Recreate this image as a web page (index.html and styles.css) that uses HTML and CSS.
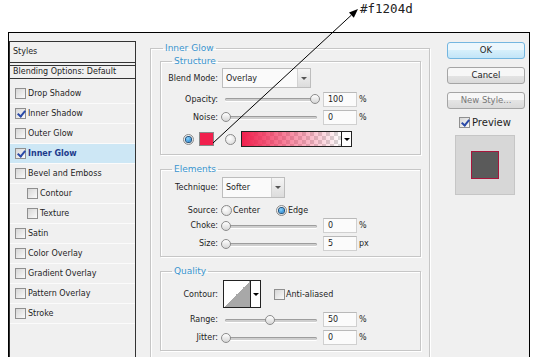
FILE: index.html
```html
<!DOCTYPE html>
<html>
<head>
  <title>Layer Style - Inner Glow</title>
  <link rel="stylesheet" href="styles.css">
</head>
<body>
  <div class="note">#f1204d</div>
  <svg class="arrow" width="539" height="357">
    <line x1="213" y1="143" x2="351.4" y2="15.1" stroke="#000" stroke-width="1"/>
    <polygon points="358,9 353.8,17.7 349,12.5" fill="#000"/>
  </svg>

  <div class="dialog">
    <div class="styles">
      <div class="styles-head">Styles</div>
      <div class="styles-blend">Blending Options: Default</div>
      <ul class="style-list">
        <li><span class="check"></span>Drop Shadow</li>
        <li><span class="check on"></span>Inner Shadow</li>
        <li><span class="check"></span>Outer Glow</li>
        <li class="sel"><span class="check on"></span>Inner Glow</li>
        <li><span class="check"></span>Bevel and Emboss</li>
        <li class="sub"><span class="check"></span>Contour</li>
        <li class="sub"><span class="check"></span>Texture</li>
        <li><span class="check"></span>Satin</li>
        <li><span class="check"></span>Color Overlay</li>
        <li><span class="check"></span>Gradient Overlay</li>
        <li><span class="check"></span>Pattern Overlay</li>
        <li><span class="check"></span>Stroke</li>
      </ul>
    </div>

    <fieldset class="group">
      <legend>Inner Glow</legend>

      <fieldset class="sub-group structure">
        <legend>Structure</legend>
        <div class="row tall">
          <label>Blend Mode:</label>
          <div class="select blend"><span>Overlay</span><i></i></div>
        </div>
        <div class="row gap2">
          <label>Opacity:</label>
          <div class="slider"><span class="knob" style="left:89px"></span></div>
          <div class="num">100</div>
          <span class="unit">%</span>
        </div>
        <div class="row gap2">
          <label>Noise:</label>
          <div class="slider"><span class="knob" style="left:0px"></span></div>
          <div class="num">0</div>
          <span class="unit">%</span>
        </div>
        <div class="row colors">
          <span class="radio on first"></span>
          <span class="swatch"></span>
          <span class="radio second"></span>
          <div class="gradient"><span class="ramp"></span><i></i></div>
        </div>
      </fieldset>

      <fieldset class="sub-group elements">
        <legend>Elements</legend>
        <div class="row technique">
          <label>Technique:</label>
          <div class="select soft"><span>Softer</span><i></i></div>
        </div>
        <div class="row source">
          <label>Source:</label>
          <span class="radio"></span><span class="opt">Center</span>
          <span class="radio on edge"></span><span class="opt">Edge</span>
        </div>
        <div class="row slim">
          <label>Choke:</label>
          <div class="slider"><span class="knob" style="left:0px"></span></div>
          <div class="num">0</div>
          <span class="unit">%</span>
        </div>
        <div class="row slim gap3">
          <label>Size:</label>
          <div class="slider"><span class="knob" style="left:0px"></span></div>
          <div class="num">5</div>
          <span class="unit">px</span>
        </div>
      </fieldset>

      <fieldset class="sub-group quality">
        <legend>Quality</legend>
        <div class="row contour-row">
          <label>Contour:</label>
          <div class="contour"><span class="curve"></span><i></i></div>
          <span class="check aa"></span><span class="opt">Anti-aliased</span>
        </div>
        <div class="row slim gap4">
          <label>Range:</label>
          <div class="slider"><span class="knob" style="left:44px"></span></div>
          <div class="num">50</div>
          <span class="unit">%</span>
        </div>
        <div class="row slim gap3">
          <label>Jitter:</label>
          <div class="slider"><span class="knob" style="left:0px"></span></div>
          <div class="num">0</div>
          <span class="unit">%</span>
        </div>
      </fieldset>
    </fieldset>

    <div class="side">
      <div class="btn ok">OK</div>
      <div class="btn">Cancel</div>
      <div class="btn off">New Style...</div>
      <div class="preview-row"><span class="check on"></span>Preview</div>
      <div class="preview"><span class="thumb"></span></div>
    </div>
  </div>
</body>
</html>
```

FILE: styles.css
```css
* {
  margin: 0;
  padding: 0;
  box-sizing: border-box;
}

body {
  font-family: "DejaVu Sans", Tahoma, sans-serif;
  font-size: 8px;
  color: #1e1e1e;
  background: #fff;
  width: 539px;
  height: 357px;
  overflow: hidden;
  position: relative;
}

.note {
  height: 32px;
  padding-left: 360px;
  padding-top: 1px;
  font-family: "DejaVu Sans Mono", monospace;
  font-size: 12.5px;
  line-height: 15px;
  color: #222;
}

.arrow {
  position: absolute;
  left: 0;
  top: 0;
  z-index: 2;
}

.dialog {
  margin-left: 8px;
  width: 522px;
  height: 325px;
  border: 1px solid #000;
  border-bottom: 0;
  background: #f0f0f0;
  display: flex;
  align-items: flex-start;
  padding-top: 8px;
}

/* left list */
.styles {
  width: 127px;
  height: 330px;
  border: 1px solid #333;
  border-bottom: 0;
  flex: none;
}

.styles-head {
  height: 21px;
  line-height: 20px;
  padding-left: 3px;
  border-bottom: 1px solid #333;
}

.styles-blend {
  margin-top: 2px;
  height: 14px;
  line-height: 12px;
  padding-left: 3px;
  border-top: 1px solid #333;
  border-bottom: 1px solid #333;
}

.style-list {
  list-style: none;
  padding-top: 5px;
}

.style-list li {
  height: 20px;
  display: flex;
  align-items: center;
  gap: 2px;
  padding-left: 5px;
  border-bottom: 1px solid #fbfbfb;
}

.style-list li.sub {
  padding-left: 17px;
}

.style-list li.sel {
  background: #cde7f5;
  color: #1c3a8c;
  font-weight: bold;
}

.check {
  width: 11px;
  height: 11px;
  border: 1px solid #8f8f8f;
  background: linear-gradient(135deg, #d6d6d6, #fafafa);
  position: relative;
  flex: none;
}

.check.on::after {
  content: "";
  position: absolute;
  left: 3px;
  top: 0;
  width: 3px;
  height: 6px;
  border: solid #2a4aa8;
  border-width: 0 2px 2px 0;
  transform: rotate(40deg);
}

.radio {
  width: 11px;
  height: 11px;
  border-radius: 50%;
  border: 1px solid #8a8a8a;
  background: radial-gradient(circle at 40% 35%, #fff, #d6d6d6);
  position: relative;
  flex: none;
}

.radio.on::after {
  content: "";
  position: absolute;
  left: 2px;
  top: 2px;
  width: 5px;
  height: 5px;
  border-radius: 50%;
  background: radial-gradient(circle at 40% 35%, #8ad6ff, #0b6fc4);
  box-shadow: 0 0 0 1px #1d4f7a;
}

/* group boxes */
fieldset {
  border: 1px solid #c6c6c6;
  box-shadow: inset 1px 1px 0 #fff, 1px 1px 0 #fff;
}

legend {
  font-size: 9px;
  line-height: 12px;
  padding: 0 2px;
  color: #3a95cf;
}

.group {
  width: 280px;
  margin-left: 14px;
  margin-top: 1px;
  padding: 0 8px 12px 9px;
  flex: none;
}

.group > legend {
  margin-left: 3px;
}

.sub-group {
  padding: 0 6px 5px 6px;
  margin-top: 8px;
}

.sub-group > legend {
  margin-left: 5px;
}

.structure {
  margin-top: 1px;
  padding-bottom: 4px;
}

.row {
  display: flex;
  align-items: center;
  height: 16px;
}

.row > label {
  width: 51px;
  margin-right: 3px;
  text-align: right;
  flex: none;
}

.row.tall {
  height: 22px;
}

.row.gap2 {
  margin-top: 2px;
}

.row.gap3 {
  margin-top: 3px;
}

.row.gap4 {
  margin-top: 4px;
}

.row.slim {
  height: 15px;
}

.select {
  display: flex;
  align-items: center;
  height: 20px;
  margin-left: 1px;
  border: 1px solid #bdbdbd;
  background: #fafafa;
}

.select span {
  flex: 1;
  padding-left: 3px;
}

.select i,
.gradient i,
.contour i {
  position: relative;
  height: 100%;
  flex: none;
}

.select i {
  width: 13px;
  border-left: 1px solid #d2d2d2;
  background: linear-gradient(#f5f5f5, #dcdcdc);
}

.select i::after,
.gradient i::after,
.contour i::after {
  content: "";
  position: absolute;
  left: 50%;
  top: 50%;
  margin: -1px 0 0 -3px;
  border-top: 3px solid #555;
  border-left: 3px solid transparent;
  border-right: 3px solid transparent;
}

.gradient i::after,
.contour i::after {
  border-top-color: #000;
}

.select.blend {
  width: 89px;
}

.select.soft {
  width: 63px;
  height: 21px;
}

.slider {
  width: 99px;
  height: 12px;
  position: relative;
  flex: none;
}

.slider::before {
  content: "";
  position: absolute;
  left: 4px;
  right: 3px;
  top: 5px;
  height: 3px;
  border-radius: 2px;
  background: #cfcfcf;
  box-shadow: inset 0 1px 0 #9d9d9d, 0 1px 0 #fff;
}

.knob {
  position: absolute;
  top: 1px;
  width: 10px;
  height: 10px;
  border-radius: 50%;
  border: 1px solid #8c8c8c;
  background: linear-gradient(#fff, #d6d6d6);
}

.num {
  width: 34px;
  height: 15px;
  margin-left: 3px;
  padding-left: 4px;
  line-height: 13px;
  border: 1px solid #d0d0d0;
  border-top-color: #b9b9b9;
  background: #fbfbfb;
  flex: none;
}

.unit {
  margin-left: 2px;
}

.row.colors {
  height: 22px;
  margin-top: 3px;
}

.radio.first {
  margin-left: 16px;
}

.swatch {
  width: 15px;
  height: 14px;
  margin-left: 5px;
  background: #f1204d;
  border: 1px solid #8a8a8a;
  flex: none;
}

.radio.second {
  margin-left: 11px;
}

.gradient {
  display: flex;
  width: 111px;
  height: 16px;
  margin-left: 5px;
  border: 1px solid #222;
  flex: none;
}

.gradient .ramp {
  flex: 1;
  background:
    linear-gradient(to right, #f1204d, rgba(241, 32, 77, 0)),
    repeating-conic-gradient(#d8d8d8 0 25%, #fff 0 50%) 0 0 / 8px 8px;
}

.gradient i {
  width: 10px;
  border-left: 1px solid #222;
  background: #fff;
}

.row.technique {
  height: 24px;
}

.row.source {
  margin-top: 3px;
}

.opt {
  margin-left: 1px;
}

.radio.edge {
  margin-left: 16px;
}

.row.contour-row {
  height: 28px;
  margin-top: 3px;
}

.contour {
  display: flex;
  width: 38px;
  height: 28px;
  margin-left: 2px;
  border: 1px solid #222;
  flex: none;
}

.contour .curve {
  flex: 1;
  background: linear-gradient(to bottom right, #fff 50%, #a8a8a8 50%);
}

.contour i {
  width: 10px;
  border-left: 1px solid #222;
  background: #fff;
}

.check.aa {
  margin-left: 13px;
}

/* right column */
.side {
  width: 78px;
  margin-left: 17px;
  margin-top: 1px;
  display: flex;
  flex-direction: column;
  flex: none;
}

.btn {
  height: 17px;
  margin-bottom: 8px;
  border: 1px solid #a5a5a5;
  border-radius: 3px;
  background: linear-gradient(#f7f7f7 50%, #e4e4e4 50%, #dadada);
  text-align: center;
  line-height: 15px;
  font-size: 8.5px;
}

.btn.ok {
  border-color: #74b6e0;
  background: linear-gradient(#ecf7fd 50%, #d6effb 50%, #c2e5f8);
}

.btn.off {
  color: #777;
}

.preview-row {
  display: flex;
  align-items: center;
  gap: 2px;
  height: 11px;
  padding-left: 12px;
  font-size: 10px;
}

.preview {
  width: 60px;
  height: 60px;
  margin: 7px 0 0 8px;
  background: #d7d7d7;
  border: 1px solid #c6c6c6;
  display: flex;
  align-items: center;
  justify-content: center;
}

.thumb {
  width: 28px;
  height: 28px;
  background: #5a5a5a;
  border: 1px solid #a8163b;
}
```
